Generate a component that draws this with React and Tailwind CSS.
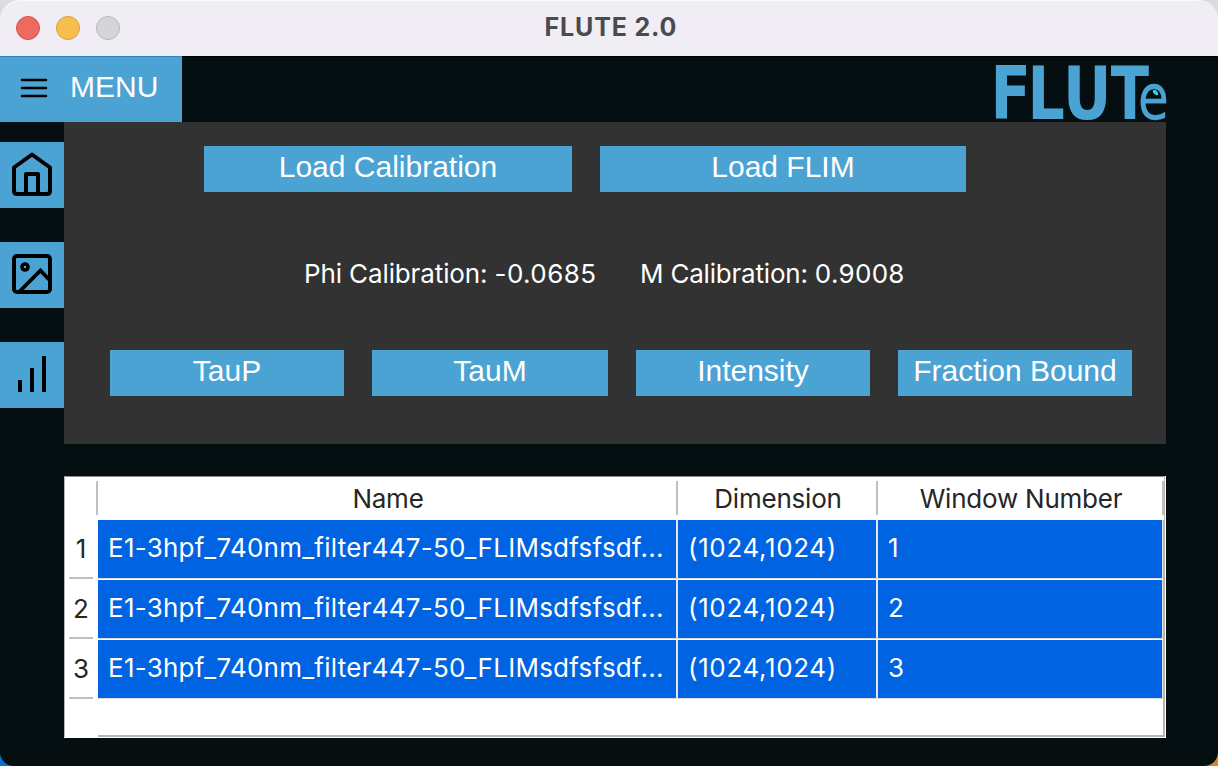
const rows = [1, 2, 3];

function Logo() {
  return (
    <svg width="174" height="60" viewBox="994 62 174 60" className="block overflow-visible" fontFamily="'DejaVu Sans', sans-serif" fill="#4ba3d3">
      <g fontWeight="700" fontSize="72.6">
        <text x="990.6" y="119" textLength="40.4" lengthAdjust="spacingAndGlyphs">F</text>
        <text x="1027.6" y="119" textLength="37.3" lengthAdjust="spacingAndGlyphs">L</text>
        <text x="1062.9" y="119" textLength="48.5" lengthAdjust="spacingAndGlyphs">U</text>
        <text x="1110.7" y="119" textLength="38.3" lengthAdjust="spacingAndGlyphs">T</text>
      </g>
      <text x="1138" y="119" fontSize="62.5" fontWeight="400" textLength="30.7" lengthAdjust="spacingAndGlyphs" stroke="#4ba3d3" strokeWidth="0.3">e</text>
      <ellipse cx="1155.5" cy="92.5" rx="3.2" ry="1.9" transform="rotate(45 1155.5 92.5)" fill="#2de2e6" />
      <circle cx="1155.5" cy="92.5" r="1" fill="#4fc08a" />
    </svg>
  );
}

function Action({ children, className }) {
  return (
    <button className={`flex h-[46px] items-center justify-center whitespace-nowrap bg-[#4ba3d3] pb-[5px] font-['Liberation_Sans',sans-serif] text-[30px] leading-none text-white ${className}`}>
      {children}
    </button>
  );
}

function SideButton({ children }) {
  return <button className="flex h-[66px] w-16 items-center justify-center bg-[#4ba3d3]">{children}</button>;
}

export default function App() {
  return (
    <div className="h-[766px] w-[1218px] overflow-hidden bg-[linear-gradient(90deg,#0a6fd0_50%,#d98324_50%)] font-['Inter',sans-serif]">
      <div className="flex h-full w-full flex-col overflow-hidden rounded-b-[14px] bg-[#050f12]">
        <div className="h-14 shrink-0 bg-[#dcdcdc]">
          <header className="flex h-full items-center rounded-t-[20px] border-t border-[#fbfafc] bg-[#f0eef4] pl-4">
            <div className="flex w-[528.5px] gap-4 pb-px">
              <span className="size-6 rounded-full border border-[#d5504a] bg-[#ed6a5e]" />
              <span className="size-6 rounded-full border border-[#d79e39] bg-[#f5bf4f]" />
              <span className="size-6 rounded-full border border-[#b9b8bc] bg-[#d5d4d9]" />
            </div>
            <h1 className="pb-[2px] text-[25px] leading-none font-bold tracking-[0.85px] text-[#4b4a4d]">FLUTE 2.0</h1>
          </header>
        </div>

        <div className="flex h-[66px] shrink-0 justify-between border-t border-black pr-[50px]">
          <button className="-mt-px flex h-[66px] w-[182px] items-center border-t border-[#2f86b7] bg-[#4ba3d3] pl-5">
            <svg width="28" height="22" viewBox="0 0 28 22" className="mb-[3px] block" stroke="#000" strokeWidth="2.5" strokeLinecap="round">
              <path d="M2 3H26M2 11H26M2 19H26" />
            </svg>
            <span className="pb-[5px] pl-[22px] font-['Liberation_Sans',sans-serif] text-[30px] leading-none text-white">MENU</span>
          </button>
          <div className="pt-[5px]">
            <Logo />
          </div>
        </div>

        <div className="flex min-h-0 flex-1">
          <nav className="flex w-16 shrink-0 flex-col gap-[34px] pt-5">
            <SideButton>
              <svg width="44" height="48" viewBox="0 0 44 48" fill="none" stroke="#000" strokeWidth="4" strokeLinejoin="round" className="mb-[2px]">
                <path d="M4 17.5L22 4.5L40 17.5V41Q40 44 37 44H7Q4 44 4 41Z" />
                <path d="M16 44V24H28V44" />
              </svg>
            </SideButton>
            <SideButton>
              <svg width="44" height="44" viewBox="0 0 44 44" fill="none" stroke="#000" strokeWidth="4" className="mb-[2px]">
                <rect x="4" y="4" width="36" height="36" rx="3" />
                <circle cx="15" cy="15" r="3" strokeWidth="3.6" />
                <path d="M9 40L30.500 18.500L39 27.500" strokeWidth="3.8" />
              </svg>
            </SideButton>
            <SideButton>
              <svg width="32" height="40" viewBox="0 0 32 40" stroke="#000" strokeWidth="4" className="mb-[2px]">
                <path d="M4 26V38M16 14V38M28 2V38" />
              </svg>
            </SideButton>
          </nav>

          <main className="flex w-[1102px] flex-col gap-8">
            <section className="flex h-[322px] flex-col bg-[#323232] pt-6">
              <div className="flex gap-7 pl-[140px]">
                <Action className="w-[368px]">Load Calibration</Action>
                <Action className="w-[366px]">Load FLIM</Action>
              </div>
              <div className="mt-[68px] flex h-7 items-center gap-[44px] pl-[240px] text-[26px] leading-none whitespace-nowrap text-white">
                <span className="w-[292px]">
                  <span className="tracking-[-0.12px]">Phi Calibration: </span>
                  <span className="tracking-[0.4px]">-0.0685</span>
                </span>
                <span>
                  <span className="tracking-[-0.2px]">M Calibration: </span>
                  <span className="tracking-[0.3px]">0.9008</span>
                </span>
              </div>
              <div className="mt-[62px] flex gap-7 pl-[46px]">
                <Action className="w-[234px]">TauP</Action>
                <Action className="w-[236px]">TauM</Action>
                <Action className="w-[234px]">Intensity</Action>
                <Action className="w-[234px]">Fraction Bound</Action>
              </div>
            </section>

            <section className="h-[262px] border-r border-b border-white bg-white">
              <div className="h-[261px] border border-t-[#8c8c8c] border-r-2 border-b-2 border-[#b5b5b5] bg-white text-[26px] leading-none text-[#262626]">
                <div className="-mr-px flex h-[43px] bg-white pt-1 pb-[5px] tracking-[-0.22px]">
                  <div className="w-[33px] border-r-2 border-[#c0c0c0]" />
                  <div className="flex w-[580px] items-center justify-center border-r-2 border-[#c0c0c0] pt-px pl-[2px]">Name</div>
                  <div className="flex w-[200px] items-center justify-center border-r-2 border-[#c0c0c0] pt-px pl-[2px]">Dimension</div>
                  <div className="flex flex-1 items-center justify-center border-r-2 border-[#c0c0c0] pt-px pl-[2px]">Window Number</div>
                </div>
                {rows.map((n) => (
                  <div key={n} className="flex h-[60px]">
                    <div className="flex w-[33px] pb-px pl-[4px]">
                      <div className="flex w-6 items-center justify-center border-b-2 border-[#c0c0c0]">{n}</div>
                    </div>
                    <div className="flex flex-1 border-b border-white">
                      <div className="flex flex-1 border-b border-[#dcdcdc] text-white">
                        <div className="flex w-[580px] items-center border-r-2 border-[#e4e4e4] bg-[#0063e1] pb-[2px] pl-[10px] tracking-[0.26px] whitespace-nowrap">
                          E1-3hpf_740nm_filter447-50_FLIMsdfsfsdf...
                        </div>
                        <div className="flex w-[200px] items-center border-r-2 border-[#e4e4e4] bg-[#0063e1] pb-[2px] pl-[10px] tracking-[0.65px]">(1024,1024)</div>
                        <div className="flex flex-1 items-center border-r border-[#e4e4e4] bg-[#0063e1] pb-[2px] pl-[10px]">{n}</div>
                      </div>
                    </div>
                  </div>
                ))}
                <div className="mt-[35px] h-[2px] w-[33px] bg-white" />
              </div>
            </section>
          </main>
        </div>
      </div>
    </div>
  );
}
